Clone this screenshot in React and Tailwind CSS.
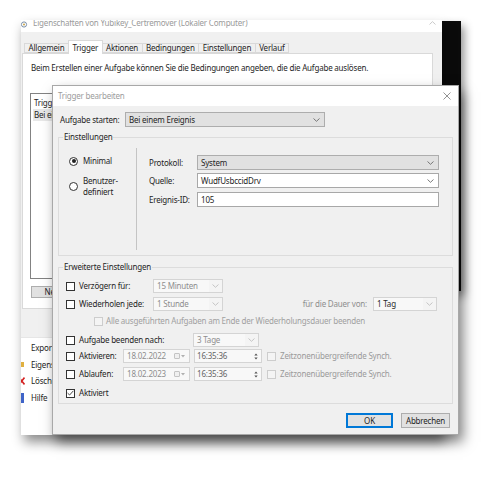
import React from "react";

function Chevron({ color = "#6b6b6b" }) {
  return (
    <svg width="7" height="4" viewBox="0 0 7 4" className="shrink-0">
      <path d="M0.5 0.5 L3.5 3.3 L6.5 0.5" fill="none" stroke={color} strokeWidth="0.9" />
    </svg>
  );
}

function Select({ value, w, bg = "bg-[#e1e1e1]", border = "border-[#adadad]", text = "text-[#1e1e1e]", chev = "#6b6b6b" }) {
  return (
    <div className={`${w} h-full flex items-center justify-between border ${border} ${bg} ${text} pl-[3px] pr-[4px]`}>
      <span className="leading-none">{value}</span>
      <Chevron color={chev} />
    </div>
  );
}

function DisSelect({ value, w, dark }) {
  return (
    <div className={`${w} h-full flex items-stretch border border-[#d4d4d4] bg-[#f4f4f4]`}>
      <span className={`flex-1 flex items-center pl-[3px] bg-[#f8f8f8] leading-none ${dark ? "text-[#2a2a2a]" : "text-[#8e8e8e]"}`}>{value}</span>
      <span className="w-[13px] flex items-center justify-center">
        <Chevron color="#c0c0c0" />
      </span>
    </div>
  );
}

function Check({ disabled, checked }) {
  return (
    <span className={`w-[9px] h-[9px] shrink-0 border flex items-center justify-center ${disabled ? "border-[#cdcdcd] bg-[#f4f4f4]" : "border-[#333333] bg-white"}`}>
      {checked && (
        <svg width="7" height="6" viewBox="0 0 7 6">
          <path d="M0.6 3.1 L2.6 5 L6.4 0.8" fill="none" stroke="#333" strokeWidth="0.9" />
        </svg>
      )}
    </span>
  );
}

function Radio({ checked }) {
  return (
    <span className="w-[9px] h-[9px] shrink-0 rounded-full border border-[#333333] bg-white flex items-center justify-center">
      {checked && <span className="w-[4px] h-[4px] rounded-full bg-[#222]" />}
    </span>
  );
}

function DateField({ value }) {
  return (
    <div className="w-[67px] h-full flex items-center justify-between border border-[#d4d4d4] bg-[#f8f8f8] pl-[3px] pr-[4px] text-[#8e8e8e]">
      <span className="leading-none">{value}</span>
      <span className="flex items-center gap-[1px]">
        <span className="w-[6px] h-[6px] border border-[#c4c4c4] rounded-[1px] bg-[#f0f0f0]" />
        <svg width="4" height="3" viewBox="0 0 4 3">
          <path d="M0 0 L4 0 L2 2.5 Z" fill="#b0b0b0" />
        </svg>
      </span>
    </div>
  );
}

function TimeField({ value }) {
  return (
    <div className="w-[68px] h-full flex items-center justify-between border border-[#d4d4d4] bg-[#f8f8f8] pl-[2px] pr-[3px] text-[#666]">
      <span className="leading-none">{value}</span>
      <svg width="4" height="7" viewBox="0 0 4 7">
        <path d="M0.3 2.6 L2 0.6 L3.7 2.6 Z" fill="#555" />
        <path d="M0.3 4.4 L2 6.4 L3.7 4.4 Z" fill="#555" />
      </svg>
    </div>
  );
}

function Tab({ label, active }) {
  return active ? (
    <div className="relative z-10 h-[14px] -mb-px px-[3.5px] flex items-center bg-white border border-b-0 border-[#d9d9d9] -mr-px text-[#1e1e1e]">
      {label}
    </div>
  ) : (
    <div className="h-[10px] px-[3.5px] flex items-center border border-[#d9d9d9] -mr-px text-[#1e1e1e]">
      {label}
    </div>
  );
}

export default function App() {
  return (
    <div className="relative w-[502px] h-[478px] bg-white overflow-hidden font-['Noto_Sans',sans-serif] text-[8px] leading-[10px] tracking-[-0.2px] text-[#1e1e1e]">
      {/* black window behind */}
      <div className="absolute left-[442px] top-[21px] w-[19px] h-[270px] bg-[#0b0b0b] shadow-[3px_5px_10px_rgba(0,0,0,0.45)]" />

      {/* background window */}
      <div className="absolute left-[21px] top-[20px] w-[421px] h-[415px] flex flex-col bg-[#f0f0f0] shadow-[3px_7px_11px_rgba(0,0,0,0.45)]">
        <div className="h-[12px] bg-white flex items-start overflow-hidden shrink-0">
          <svg width="7" height="7" viewBox="0 0 7 7" className="mt-[1px] shrink-0">
            <circle cx="3" cy="3.5" r="2.6" fill="none" stroke="#7a8fa8" strokeWidth="1" />
            <circle cx="3" cy="3.5" r="1" fill="#c9a34a" />
          </svg>
          <span className="ml-[5px] -mt-[2px] text-[#9a9a9a] whitespace-nowrap">Eigenschaften von Yubikey_Certremover (Lokaler Computer)</span>
          <span className="ml-auto mr-[6px] mt-[1px]">
            <svg width="7" height="4" viewBox="0 0 7 4">
              <path d="M0.5 3.5 L3.5 0.6 L6.5 3.5" fill="none" stroke="#c4c4c4" strokeWidth="0.9" />
            </svg>
          </span>
        </div>
        <div className="flex items-end h-[21px] pl-[3px] pb-0 shrink-0">
          <Tab label="Allgemein" />
          <Tab label="Trigger" active />
          <Tab label="Aktionen" />
          <Tab label="Bedingungen" />
          <Tab label="Einstellungen" />
          <Tab label="Verlauf" />
        </div>
        <div className="ml-[1px] w-[411px] h-[256px] shrink-0 bg-white border border-[#d9d9d9] pt-[9px] pl-[8px] flex flex-col">
          <div className="whitespace-nowrap">Beim Erstellen einer Aufgabe können Sie die Bedingungen angeben, die die Aufgabe auslösen.</div>
          <div className="mt-[20px] -ml-[1px] w-[390px] h-[186px] border border-[#828282] pt-[2px] pl-[2px] flex flex-col">
            <div className="h-[13px] flex items-center pl-[1px]">Trigger</div>
            <div className="h-[12px] flex items-center pl-[1px] bg-[#e8e8e8]">Bei einem Ereignis</div>
          </div>
          <div className="mt-[7px] w-[48px] h-[12px] flex items-center justify-center bg-[#e1e1e1] border border-[#adadad]">Neu...</div>
        </div>
        <div className="h-[28px] shrink-0" />
        <div className="flex-1 bg-white border-t border-[#e6e6e6] flex flex-col pt-[2px]">
          <div className="h-[16.5px] flex items-center pl-[10px]">Exportieren...</div>
          <div className="h-[16.5px] flex items-center">
            <span className="w-[3px] h-[5px] bg-[#e0b040] shrink-0" />
            <span className="ml-[7px]">Eigenschaften</span>
          </div>
          <div className="h-[16.5px] flex items-center">
            <svg width="4" height="8" viewBox="0 0 4 8" className="shrink-0">
              <path d="M-2 0.5 L3.5 7.5 M3.5 0.5 L-2 7.5" stroke="#d42020" strokeWidth="1.6" />
            </svg>
            <span className="ml-[6px]">Löschen</span>
          </div>
          <div className="h-[16.5px] flex items-center">
            <span className="w-[3px] h-[10px] bg-[#3f64c8] shrink-0" />
            <span className="ml-[7px]">Hilfe</span>
          </div>
        </div>
      </div>

      {/* dialog */}
      <div className="absolute left-[52px] top-[85px] w-[407px] h-[350px] flex flex-col bg-[#f0f0f0] border border-[#a8a8a8] shadow-[4px_7px_12px_rgba(0,0,0,0.5)]">
        <div className="h-[20px] shrink-0 bg-white flex items-center pl-[5px] pr-[7px]">
          <span className="text-[#9c9c9c]">Trigger bearbeiten</span>
          <svg width="8" height="8" viewBox="0 0 8 8" className="ml-auto">
            <path d="M0.5 0.5 L7.5 7.5 M7.5 0.5 L0.5 7.5" stroke="#777" strokeWidth="0.8" />
          </svg>
        </div>
        <div className="flex-1 flex flex-col px-[5px]">
          {/* Aufgabe starten */}
          <div className="mt-[6px] h-[15px] flex items-center">
            <span className="ml-[2px] w-[65px] shrink-0">Aufgabe starten:</span>
            <Select value="Bei einem Ereignis" w="w-[200px]" />
          </div>

          {/* Einstellungen */}
          <fieldset className="mt-[5px] h-[124px] border border-[#dcdcdc]">
            <legend className="ml-[4px] px-[1px] leading-[10px]">Einstellungen</legend>
            <div className="mt-[6px] h-[102px] flex">
              <div className="w-[77px] shrink-0 flex flex-col pl-[10px]">
                <div className="mt-[8px] h-[10px] flex items-center">
                  <Radio checked />
                  <span className="ml-[5px]">Minimal</span>
                </div>
                <div className="mt-[9px] flex items-center">
                  <Radio />
                  <span className="ml-[5px] leading-[11px]">Benutzer-<br />definiert</span>
                </div>
              </div>
              <div className="flex-1 border-l border-[#c4c4c4] pl-[12px] pt-[7px] flex flex-col">
                <div className="h-[15px] flex items-center">
                  <span className="w-[48px] shrink-0">Protokoll:</span>
                  <Select value="System" w="w-[242px]" />
                </div>
                <div className="mt-[3px] h-[15px] flex items-center">
                  <span className="w-[48px] shrink-0">Quelle:</span>
                  <Select value="WudfUsbccidDrv" w="w-[242px]" bg="bg-white" border="border-[#a8a8a8]" />
                </div>
                <div className="mt-[4px] h-[15px] flex items-center">
                  <span className="w-[48px] shrink-0">Ereignis-ID:</span>
                  <div className="w-[242px] h-full flex items-center border border-[#a8a8a8] bg-white pl-[3px]">105</div>
                </div>
              </div>
            </div>
          </fieldset>

          {/* Erweiterte Einstellungen */}
          <fieldset className="mt-[6px] h-[142px] border border-[#dcdcdc]">
            <legend className="ml-[4px] px-[1px] leading-[10px]">Erweiterte Einstellungen</legend>
            <div className="flex flex-col pr-[15px]">
              <div className="mt-[7px] h-[14px] flex items-center pl-[7px]">
                <Check />
                <span className="ml-[4px] w-[74px] shrink-0">Verzögern für:</span>
                <DisSelect value="15 Minuten" w="w-[70px]" />
              </div>
              <div className="mt-[4px] h-[14px] flex items-center pl-[7px]">
                <Check />
                <span className="ml-[4px] w-[74px] shrink-0">Wiederholen jede:</span>
                <DisSelect value="1 Stunde" w="w-[70px]" />
                <span className="flex-1 text-right pr-[6px] text-[#8e8e8e]">für die Dauer von:</span>
                <DisSelect value="1 Tag" w="w-[64px]" dark />
              </div>
              <div className="mt-[3px] h-[14px] flex items-center pl-[35px]">
                <Check disabled />
                <span className="ml-[3px] text-[#a0a0a0] whitespace-nowrap">Alle ausgeführten Aufgaben am Ende der Wiederholungsdauer beenden</span>
              </div>
              <div className="mt-[5px] h-[14px] flex items-center pl-[7px]">
                <Check />
                <span className="ml-[4px] w-[114px] shrink-0">Aufgabe beenden nach:</span>
                <DisSelect value="3 Tage" w="w-[66px]" />
              </div>
              <div className="mt-[2px] h-[14px] flex items-center pl-[7px]">
                <Check />
                <span className="ml-[4px] w-[44px] shrink-0">Aktivieren:</span>
                <DateField value="18.02.2022" />
                <span className="ml-[4px] h-full flex"><TimeField value="16:35:36" /></span>
                <span className="ml-[5px]"><Check disabled /></span>
                <span className="ml-[4px] text-[#9a9a9a]">Zeitzonenübergreifende Synch.</span>
              </div>
              <div className="mt-[4px] h-[14px] flex items-center pl-[7px]">
                <Check />
                <span className="ml-[4px] w-[44px] shrink-0">Ablaufen:</span>
                <DateField value="18.02.2023" />
                <span className="ml-[4px] h-full flex"><TimeField value="16:35:36" /></span>
                <span className="ml-[5px]"><Check disabled /></span>
                <span className="ml-[4px] text-[#9a9a9a]">Zeitzonenübergreifende Synch.</span>
              </div>
              <div className="mt-[5px] h-[14px] flex items-center pl-[7px]">
                <Check checked />
                <span className="ml-[4px]">Aktiviert</span>
              </div>
            </div>
          </fieldset>

          {/* Buttons */}
          <div className="mt-[9px] flex justify-end gap-[8px] mr-[3px]">
            <div className="w-[47px] h-[15px] flex items-center justify-center bg-[#e1e1e1] border border-[#0078d7] shadow-[inset_0_0_0_1px_#0078d7]">OK</div>
            <div className="w-[49px] h-[15px] flex items-center justify-center bg-[#e1e1e1] border border-[#adadad]">Abbrechen</div>
          </div>
        </div>
      </div>
    </div>
  );
}
